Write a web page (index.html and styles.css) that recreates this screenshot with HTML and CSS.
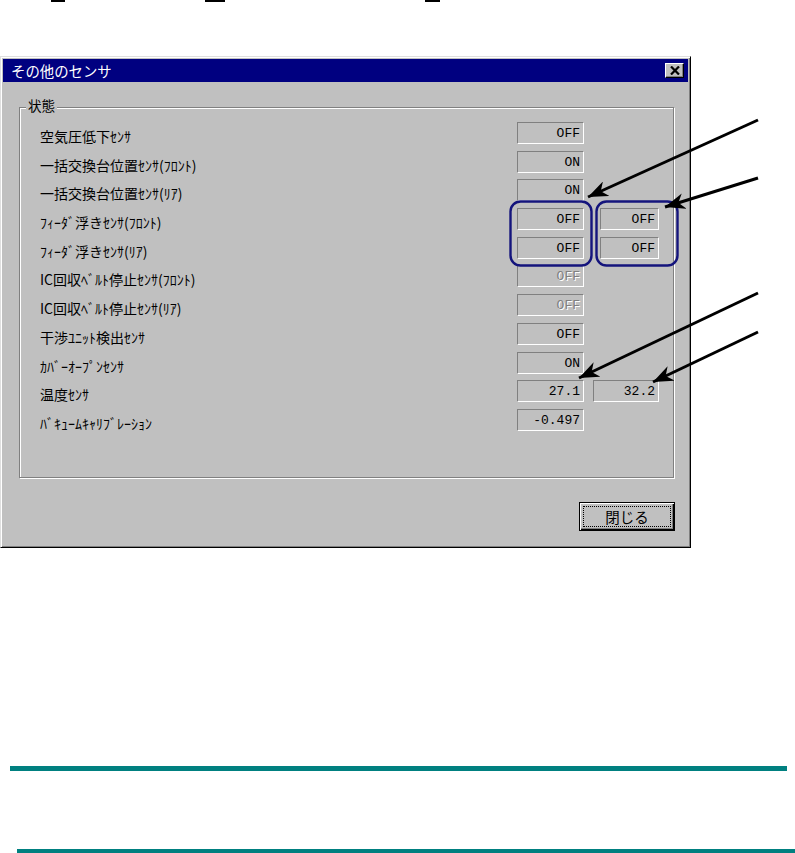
FILE: index.html
```html
<!DOCTYPE html>
<html lang="ja">
<head>
<meta charset="utf-8">
<title>その他のセンサ</title>
<link rel="stylesheet" href="styles.css">
</head>
<body>
<div class="page">
  <div class="marks">
    <span class="mark m1"></span><span class="mark m2"></span><span class="mark m3"></span>
  </div>

  <div class="dialog">
    <div class="titlebar">
      <span class="title">その他のセンサ</span>
      <span class="xbtn"><svg width="10" height="9" viewBox="0 0 10 9"><path d="M1 0.5 L9 8.5 M9 0.5 L1 8.5" stroke="#000" stroke-width="2.2" fill="none"/></svg></span>
    </div>
    <div class="body">
      <fieldset class="group">
        <legend class="legend">状態</legend>
        <div class="rows">
          <div class="row"><span class="label">空気圧低下ｾﾝｻ</span><span class="val">OFF</span></div>
          <div class="row"><span class="label">一括交換台位置ｾﾝｻ(ﾌﾛﾝﾄ)</span><span class="val">ON</span></div>
          <div class="row"><span class="label">一括交換台位置ｾﾝｻ(ﾘｱ)</span><span class="val">ON</span></div>
          <div class="row"><span class="label">ﾌｨｰﾀﾞ浮きｾﾝｻ(ﾌﾛﾝﾄ)</span><span class="val">OFF</span><span class="val short">OFF</span></div>
          <div class="row"><span class="label">ﾌｨｰﾀﾞ浮きｾﾝｻ(ﾘｱ)</span><span class="val">OFF</span><span class="val short">OFF</span></div>
          <div class="row"><span class="label">IC回収ﾍﾞﾙﾄ停止ｾﾝｻ(ﾌﾛﾝﾄ)</span><span class="val disabled">OFF</span></div>
          <div class="row"><span class="label">IC回収ﾍﾞﾙﾄ停止ｾﾝｻ(ﾘｱ)</span><span class="val disabled">OFF</span></div>
          <div class="row"><span class="label">干渉ﾕﾆｯﾄ検出ｾﾝｻ</span><span class="val">OFF</span></div>
          <div class="row"><span class="label">ｶﾊﾞｰｵｰﾌﾟﾝｾﾝｻ</span><span class="val">ON</span></div>
          <div class="row"><span class="label">温度ｾﾝｻ</span><span class="val">27.1</span><span class="val">32.2</span></div>
          <div class="row"><span class="label">ﾊﾞｷｭｰﾑｷｬﾘﾌﾞﾚｰｼｮﾝ</span><span class="val">-0.497</span></div>
        </div>
      </fieldset>
      <div class="actions">
        <button class="btn"><span class="btn-focus">閉じる</span></button>
      </div>
    </div>
  </div>

  <div class="rule r1"></div>
  <div class="rule r2"></div>

  <svg class="annot" width="795" height="853" viewBox="0 0 795 853">
    <defs>
      <marker id="ah" markerUnits="userSpaceOnUse" markerWidth="22" markerHeight="16" refX="20" refY="8" orient="auto">
        <path d="M0 0 L20 8 L0 16 L6 8 Z" fill="#000"/>
      </marker>
    </defs>
    <rect x="510.5" y="201.5" width="81" height="64" rx="10" ry="10" fill="none" stroke="#14147c" stroke-width="2.4"/>
    <rect x="596.5" y="201.5" width="81" height="64" rx="10" ry="10" fill="none" stroke="#14147c" stroke-width="2.4"/>
    <g stroke="#000" stroke-width="3" fill="none" marker-end="url(#ah)">
      <line x1="758" y1="120" x2="588" y2="197"/>
      <line x1="758" y1="178" x2="665" y2="207"/>
      <line x1="758" y1="293" x2="579" y2="378"/>
      <line x1="758" y1="332" x2="653" y2="382"/>
    </g>
  </svg>
</div>
</body>
</html>
```

FILE: styles.css
```css
html, body {
  margin: 0;
  padding: 0;
  background: #fff;
}

.page {
  position: relative;
  width: 795px;
  height: 853px;
  overflow: hidden;
  font-family: "Noto Sans CJK JP", "DejaVu Sans", sans-serif;
}

.marks {
  display: flex;
  height: 2px;
}
.mark {
  display: block;
  height: 2px;
  background: #000;
}
.m1 { margin-left: 51px; width: 14px; }
.m2 { margin-left: 140px; width: 20px; }
.m3 { margin-left: 200px; width: 15px; }

.dialog {
  margin-top: 54px;
  width: 691px;
  height: 492px;
  box-sizing: border-box;
  background: #c0c0c0;
  border-top: 1px solid #dfdfdf;
  border-left: 1px solid #dfdfdf;
  border-right: 1px solid #000;
  border-bottom: 1px solid #000;
  box-shadow: inset 1px 1px 0 #fff, inset -1px -1px 0 #808080;
  padding: 2px;
  display: flex;
  flex-direction: column;
}

.titlebar {
  height: 23px;
  background: #000080;
  display: flex;
  align-items: center;
  justify-content: space-between;
  padding: 0 4px 0 8px;
}
.title {
  color: #fff;
  font-size: 14.4px;
  line-height: 16px;
}
.xbtn {
  width: 19px;
  height: 15px;
  box-sizing: border-box;
  background: #c0c0c0;
  border-top: 1px solid #fff;
  border-left: 1px solid #fff;
  border-right: 1px solid #000;
  border-bottom: 1px solid #000;
  box-shadow: inset -1px -1px 0 #808080;
  display: flex;
  align-items: center;
  justify-content: center;
}

.body {
  flex: 1;
  padding: 15px 14px 0 16px;
  display: flex;
  flex-direction: column;
}

.group {
  margin: 0;
  padding: 0;
  border: 1px solid #808080;
  box-shadow: 1px 1px 0 #fff, inset 1px 1px 0 #fff;
  min-width: 0;
}
.legend {
  margin-left: 6px;
  padding: 0 2px 4px;
  font-size: 13.5px;
  line-height: 16px;
  color: #000;
  background: #c0c0c0;
}

.rows {
  display: flex;
  flex-direction: column;
  gap: 6.7px;
  padding: 5px 14px 46px 20px;
}
.row {
  display: grid;
  grid-template-columns: 1fr 67px 66px;
  column-gap: 9px;
  align-items: center;
  height: 22px;
}
.label {
  font-size: 14px;
  line-height: 16px;
  color: #000;
  padding-top: 6px;
  white-space: nowrap;
}
.val {
  height: 22px;
  box-sizing: border-box;
  border-top: 1px solid #808080;
  border-left: 1px solid #808080;
  border-right: 1px solid #fff;
  border-bottom: 1px solid #fff;
  font-family: "Liberation Mono", "DejaVu Sans Mono", monospace;
  font-size: 13px;
  line-height: 21px;
  text-align: right;
  padding-right: 3px;
  color: #000;
}
.val.short {
  width: 59px;
  justify-self: end;
}
.val.disabled {
  color: #808080;
  text-shadow: 1px 1px 0 #fff;
}

.actions {
  display: flex;
  justify-content: flex-end;
  margin-top: 24px;
  margin-right: -1px;
}
.btn {
  width: 96px;
  height: 29px;
  box-sizing: border-box;
  margin: 0;
  padding: 3px;
  background: #c0c0c0;
  border: 1px solid #000;
  box-shadow: inset 1px 1px 0 #fff, inset -1px -1px 0 #000, inset -2px -2px 0 #808080;
  font-family: "Noto Sans CJK JP", "DejaVu Sans", sans-serif;
  font-size: 14.5px;
  color: #000;
  display: flex;
}
.btn-focus {
  flex: 1;
  border: 1px dotted #000;
  line-height: 19px;
  text-align: center;
}

.rule {
  background: #008080;
}
.r1 {
  margin-top: 218px;
  margin-left: 10px;
  width: 777px;
  height: 5px;
}
.r2 {
  margin-top: 78px;
  margin-left: 17px;
  width: 778px;
  height: 4px;
}

.annot {
  position: absolute;
  left: 0;
  top: 0;
  pointer-events: none;
}
```
